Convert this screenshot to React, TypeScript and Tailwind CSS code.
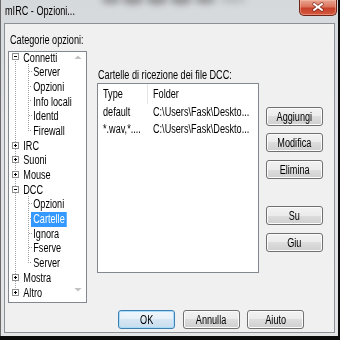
import React from "react";

type Row = { t: string; lvl: 0 | 1; exp?: "-" | "+"; sel?: boolean };

const rows: Row[] = [
  { t: "Connetti", lvl: 0, exp: "-" },
  { t: "Server", lvl: 1 },
  { t: "Opzioni", lvl: 1 },
  { t: "Info locali", lvl: 1 },
  { t: "Identd", lvl: 1 },
  { t: "Firewall", lvl: 1 },
  { t: "IRC", lvl: 0, exp: "+" },
  { t: "Suoni", lvl: 0, exp: "+" },
  { t: "Mouse", lvl: 0, exp: "+" },
  { t: "DCC", lvl: 0, exp: "-" },
  { t: "Opzioni", lvl: 1 },
  { t: "Cartelle", lvl: 1, sel: true },
  { t: "Ignora", lvl: 1 },
  { t: "Fserve", lvl: 1 },
  { t: "Server", lvl: 1 },
  { t: "Mostra", lvl: 0, exp: "+" },
  { t: "Altro", lvl: 0, exp: "+" },
];

function T({ children }: { children: React.ReactNode }) {
  return <span className="inline-block whitespace-nowrap origin-left scale-x-[0.76]">{children}</span>;
}

function TreeDrawing() {
  const pc = (i: number) => Math.floor(5.85 + 14.7 * i);
  const dots: React.ReactElement[] = [];
  let k = 0;
  const vline = (x: number, y0: number, y1: number) => {
    for (let y = y0; y <= y1; y++)
      if ((x + y) % 2 === 0) dots.push(<rect key={k++} x={x} y={y} width={1} height={1} />);
  };
  const hline = (y: number, x0: number, x1: number) => {
    for (let x = x0; x <= x1; x++)
      if ((x + y) % 2 === 0) dots.push(<rect key={k++} x={x} y={y} width={1} height={1} />);
  };
  vline(6, pc(0), pc(16));
  vline(19, pc(0) + 7, pc(5));
  for (let i = 1; i <= 5; i++) hline(pc(i), 20, 22);
  vline(19, pc(9) + 7, pc(14));
  for (let i = 10; i <= 14; i++) hline(pc(i), 20, 22);

  return (
    <svg className="absolute left-0 top-0" width="77" height="250" shapeRendering="crispEdges">
      <g fill="#a0a0a0">{dots}</g>
      {rows.map((r, i) => {
        if (r.lvl !== 0) return null;
        const c = pc(i);
        return (
          <g key={"b" + i}>
            <rect x={3.5} y={c - 2.5} width={6} height={6} fill="#ffffff" stroke="#8e8f8f" />
            <line x1={5} x2={8} y1={c + 0.5} y2={c + 0.5} stroke="#000000" />
            {r.exp === "+" && <line x1={6.5} x2={6.5} y1={c - 1} y2={c + 2} stroke="#000000" />}
          </g>
        );
      })}
      <polygon points="65.5,8 72.5,8 69,4.5" fill="#c2c2c2" shapeRendering="auto" />
      <polygon points="65.5,237 72.5,237 69,240.5" fill="#c2c2c2" shapeRendering="auto" />
    </svg>
  );
}

function Btn({ label, def }: { label: string; def?: boolean }) {
  return (
    <div
      className={
        def
          ? "h-[19px] w-[57px] rounded-[3px] border border-[#3c7fb1] shadow-[inset_0_0_0_1px_#a9dcf8] bg-[linear-gradient(#eef6fc_0%,#e6f0f8_50%,#d6e6f3_50%,#c9ddee_100%)] flex items-center justify-center leading-[14px]"
          : "h-[19px] w-[57px] rounded-[3px] border border-[#707070] shadow-[inset_0_0_0_1px_#fbfbfb] bg-[linear-gradient(#f2f2f2_0%,#ebebeb_50%,#dddddd_50%,#cfcfcf_100%)] flex items-center justify-center leading-[14px]"
      }
    >
      <span className="inline-block whitespace-nowrap origin-center scale-x-[0.76]">{label}</span>
    </div>
  );
}

export default function App() {
  return (
    <div className="w-[340px] h-[340px] bg-[#0b0b0b] overflow-hidden text-black text-[12px] font-['Liberation_Sans',Arial,sans-serif]">
      <div className="w-[338px] h-[336px] border-l border-[#6a6a6a] bg-[linear-gradient(180deg,#d6d9dc_0%,#dfe1e4_40%,#e3e5e7_100%)]">
        {/* title bar */}
        <div className="relative h-[23px] flex items-start">
          <svg className="absolute left-0 top-0" width="337" height="23">
            <defs>
              <filter id="blur" x="-50%" y="-100%" width="200%" height="300%">
                <feGaussianBlur stdDeviation="3.4" />
              </filter>
            </defs>
            <g filter="url(#blur)" fill="#3c3c3c" opacity="0.42">
              <ellipse cx="110" cy="0" rx="10" ry="4" />
              <ellipse cx="132" cy="0" rx="11" ry="5" />
              <ellipse cx="156" cy="0" rx="11" ry="5" />
              <ellipse cx="180" cy="0" rx="11" ry="5" />
              <ellipse cx="204" cy="0" rx="11" ry="4" />
              <ellipse cx="232" cy="0" rx="14" ry="3" opacity="0.5" />
            </g>
          </svg>
          <div className="relative ml-[4px] mt-[4px] leading-[14px] w-[120px]">
            <T>mIRC - Opzioni...</T>
          </div>
          <div className="relative ml-auto mr-[1px] w-[38px] h-[16px] rounded-b-[5px] border border-t-0 border-[#6e2418] bg-[linear-gradient(#e8a592_0%,#dc735c_45%,#c7402a_55%,#d4593f_100%)] shadow-[inset_0_0_0_1px_rgba(255,200,180,0.45)]">
            <svg className="absolute left-0 top-0" width="36" height="15">
              <g strokeLinecap="round">
                <line x1="14" y1="4" x2="22" y2="10" stroke="#6a1e12" strokeWidth="3.6" opacity="0.6" />
                <line x1="22" y1="4" x2="14" y2="10" stroke="#6a1e12" strokeWidth="3.6" opacity="0.6" />
                <line x1="14" y1="4" x2="22" y2="10" stroke="#ffffff" strokeWidth="2" />
                <line x1="22" y1="4" x2="14" y2="10" stroke="#ffffff" strokeWidth="2" />
              </g>
            </svg>
          </div>
        </div>

        {/* client area */}
        <div className="ml-[3px] w-[331px] h-[310px] border border-[#8b9197] bg-[#f0f0f0]">
          <div className="flex items-start">
            {/* left column */}
            <div className="ml-[3px] w-[79px] shrink-0 flex flex-col">
              <div className="mt-[9px] h-[14px] leading-[14px] pl-[2px]">
                <T>Categorie opzioni:</T>
              </div>
              <div className="mt-[4px] w-[79px] h-[252px] border border-[#828790] bg-white overflow-hidden">
                <div className="relative w-[77px] h-[250px]">
                  <TreeDrawing />
                  <div className="relative -mt-[1.5px] flex flex-col">
                    {rows.map((r, i) => (
                      <div key={i} className="h-[14.7px] leading-[14.7px] flex whitespace-nowrap">
                        <span
                          className={
                            (r.lvl === 0
                              ? "inline-block origin-left scale-x-[0.76] ml-[12px] px-[3px]"
                              : "inline-block origin-left scale-x-[0.76] ml-[22px] px-[3px]") +
                            (r.sel ? " bg-[#3399ff] text-white" : "")
                          }
                        >
                          {r.t}
                        </span>
                      </div>
                    ))}
                  </div>
                </div>
              </div>
            </div>

            {/* middle column */}
            <div className="ml-[10px] w-[162px] shrink-0 flex flex-col">
              <div className="mt-[44px] h-[14px] leading-[14px] pl-[1px]">
                <T>Cartelle di ricezione dei file DCC:</T>
              </div>
              <div className="mt-[1px] w-[162px] h-[190px] border border-[#828790] bg-white overflow-hidden">
                <div className="h-[20px] flex">
                  <div className="w-[50px] shrink-0 pl-[5px] leading-[20px] border-r border-[#e5e5e5]">
                    <T>Type</T>
                  </div>
                  <div className="pl-[5px] leading-[20px]">
                    <T>Folder</T>
                  </div>
                </div>
                <div className="h-[17px] flex leading-[17px]">
                  <div className="w-[50px] shrink-0 pl-[5px]">
                    <T>default</T>
                  </div>
                  <div className="pl-[5px]">
                    <T>{"C:\\Users\\Fask\\Deskto..."}</T>
                  </div>
                </div>
                <div className="h-[17px] flex leading-[17px]">
                  <div className="w-[50px] shrink-0 pl-[5px]">
                    <T>*.wav,*....</T>
                  </div>
                  <div className="pl-[5px]">
                    <T>{"C:\\Users\\Fask\\Deskto..."}</T>
                  </div>
                </div>
              </div>
            </div>

            {/* right buttons */}
            <div className="ml-[7px] mt-[83px] shrink-0 flex flex-col">
              <Btn label="Aggiungi" />
              <div className="mt-[7px]">
                <Btn label="Modifica" />
              </div>
              <div className="mt-[8px]">
                <Btn label="Elimina" />
              </div>
              <div className="mt-[27px]">
                <Btn label="Su" />
              </div>
              <div className="mt-[8px]">
                <Btn label="Giu" />
              </div>
            </div>
          </div>

          {/* bottom buttons */}
          <div className="mt-[7px] ml-[113px] flex">
            <Btn label="OK" def />
            <div className="ml-[8px]">
              <Btn label="Annulla" />
            </div>
            <div className="ml-[7px]">
              <Btn label="Aiuto" />
            </div>
          </div>
        </div>
      </div>
    </div>
  );
}
